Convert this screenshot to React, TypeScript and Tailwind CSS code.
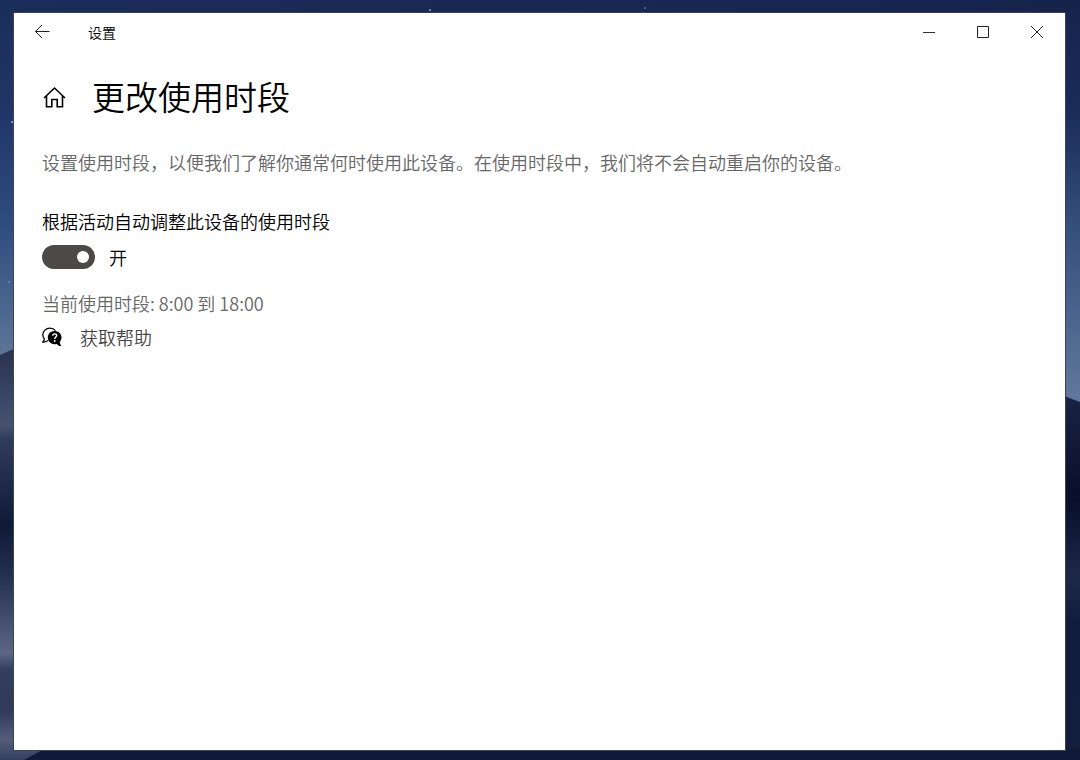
import { useState } from "react"

function Wallpaper() {
    return (
        <svg className="absolute inset-0 w-full h-full" viewBox="0 0 1080 760" preserveAspectRatio="none" aria-hidden="true">
            <defs>
                <linearGradient id="skyLeft" x1="0" y1="0" x2="0" y2="1">
                    <stop offset="0" stopColor="#1b2d5a" />
                    <stop offset="0.15" stopColor="#213668" />
                    <stop offset="0.3" stopColor="#304d80" />
                    <stop offset="0.46" stopColor="#5a7396" />
                </linearGradient>
                <linearGradient id="skyRight" x1="0" y1="0" x2="0" y2="1">
                    <stop offset="0" stopColor="#16244c" />
                    <stop offset="0.15" stopColor="#1b2c59" />
                    <stop offset="0.3" stopColor="#36507d" />
                    <stop offset="0.52" stopColor="#60769a" />
                </linearGradient>
                <linearGradient id="skyTop" x1="0" y1="0" x2="1" y2="0">
                    <stop offset="0" stopColor="#1b2d5a" />
                    <stop offset="1" stopColor="#16244c" />
                </linearGradient>
                <linearGradient id="duneLeft" gradientUnits="userSpaceOnUse" x1="0" y1="348" x2="0" y2="760">
                    <stop offset="0" stopColor="#29324c" />
                    <stop offset="0.12" stopColor="#3a4666" />
                    <stop offset="0.19" stopColor="#47526f" />
                    <stop offset="0.22" stopColor="#303c5b" />
                    <stop offset="0.43" stopColor="#0e1a36" />
                    <stop offset="0.55" stopColor="#232f4f" />
                    <stop offset="0.74" stopColor="#5c6584" />
                    <stop offset="0.78" stopColor="#343f5e" />
                    <stop offset="0.88" stopColor="#303a58" />
                    <stop offset="0.95" stopColor="#535d7b" />
                    <stop offset="1" stopColor="#343e5e" />
                </linearGradient>
                <linearGradient id="duneRight" gradientUnits="userSpaceOnUse" x1="0" y1="396" x2="0" y2="760">
                    <stop offset="0" stopColor="#1a2342" />
                    <stop offset="0.28" stopColor="#070f2a" />
                    <stop offset="0.5" stopColor="#1e2848" />
                    <stop offset="0.62" stopColor="#121c3e" />
                    <stop offset="1" stopColor="#131d3e" />
                </linearGradient>
            </defs>
            <rect width="540" height="760" fill="url(#skyLeft)" />
            <rect x="540" width="540" height="760" fill="url(#skyRight)" />
            <rect width="1080" height="14" fill="url(#skyTop)" />
            <path d="M0 355L16 348L540 600V760H0Z" fill="url(#duneLeft)" />
            <path d="M540 500L1064 396L1080 402V760H540Z" fill="url(#duneRight)" />
            <path d="M24 760L46 748H1080V760Z" fill="#101a38" />
            <circle cx="12" cy="122" r="1" fill="#a9bad6" />
            <circle cx="430" cy="10" r="1" fill="#8fa0c4" />
            <circle cx="645" cy="8" r="1" fill="#5d6e98" />
            <circle cx="9" cy="282" r="1" fill="#6d87b0" />
        </svg>
    )
}

function HelpIcon() {
    return (
        <svg className="w-5 h-5" viewBox="0 0 20 20" fill="none" aria-hidden="true">
            <path d="M6.2 13.4C5 14.6 3 15.2 0.8 15C1.9 14 2.4 13 2.3 11.8C1.2 10.6 0.8 9.2 0.8 7.8C0.8 4.2 4 1.2 7.8 1.2C10.2 1.2 12.2 2.1 13.5 3.6" stroke="#000" strokeWidth="1.3" />
            <path d="M12.6 4C16.5 4 19.5 6.8 19.5 10.5C19.5 12.2 18.8 13.7 17.8 14.8C17.8 16.4 18.4 17.8 19.4 19C17.6 19.2 16 18.4 14.9 16.9C14.2 17.1 13.4 17.2 12.6 17.2C8.8 17.2 5.8 14.3 5.8 10.5C5.8 6.8 8.8 4 12.6 4Z" fill="#000" />
            <path d="M10.7 8.8C10.7 7.6 11.5 6.9 12.7 6.9C13.9 6.9 14.7 7.6 14.7 8.6C14.7 10 12.7 10 12.7 11.9" stroke="#fff" strokeWidth="1.4" />
            <circle cx="12.7" cy="14" r="0.9" fill="#fff" />
        </svg>
    )
}

export default function App() {
    const [auto, setAuto] = useState(true)

    return (
        <div className="relative flex min-h-screen pt-3 pr-[14px] pb-[9px] pl-[13px] bg-[#16244c] font-['Noto_Sans_CJK_SC',sans-serif] text-black">
            <Wallpaper />
            <div className="relative flex flex-1 flex-col border border-[#3a4254] bg-white">
                <header className="flex h-[38px] items-center pr-px">
                    <button type="button" aria-label="返回" className="flex h-9 w-14 items-center justify-center">
                        <svg width="16" height="16" viewBox="0 0 16 16" fill="none" stroke="#222" aria-hidden="true">
                            <path d="M15.5 7.5H1.5M8 1L1.5 7.5L8 14" />
                        </svg>
                    </button>
                    <span className="ml-[18px] flex-1 text-sm font-[350]">设置</span>
                    <button type="button" aria-label="最小化" className="flex h-9 w-[54px] items-center justify-center">
                        <svg width="12" height="12" viewBox="0 0 12 12" stroke="#333" aria-hidden="true">
                            <path d="M0 6.5H12" />
                        </svg>
                    </button>
                    <button type="button" aria-label="最大化" className="flex h-9 w-[54px] items-center justify-center">
                        <svg width="12" height="12" viewBox="0 0 12 12" fill="none" stroke="#222" aria-hidden="true">
                            <path d="M0.5 0.5H11.5V11.5H0.5Z" />
                        </svg>
                    </button>
                    <button type="button" aria-label="关闭" className="flex h-9 w-[54px] items-center justify-center">
                        <svg width="12" height="12" viewBox="0 0 12 12" stroke="#222" aria-hidden="true">
                            <path d="M0 0L12 12M12 0L0 12" />
                        </svg>
                    </button>
                </header>

                <main className="flex flex-col px-7 pt-[21px]">
                    <div className="flex items-center gap-[26px]">
                        <button type="button" aria-label="主页" className="flex h-6 w-6 items-center justify-center">
                            <svg width="24" height="24" viewBox="0 0 24 24" fill="none" stroke="#000" strokeWidth="1.6" aria-hidden="true">
                                <path d="M2 14L12.5 4L23 14M4.5 12V22.7H9.8V15.5H15.2V22.7H20.5V12" />
                            </svg>
                        </button>
                        <h1 className="text-[33px] leading-[48px] font-[350]">更改使用时段</h1>
                    </div>

                    <p className="mt-7 text-lg leading-7 font-[350] text-[#666]">
                        设置使用时段，以便我们了解你通常何时使用此设备。在使用时段中，我们将不会自动重启你的设备。
                    </p>

                    <label htmlFor="auto" className="mt-[31px] text-lg leading-7 font-[350]">根据活动自动调整此设备的使用时段</label>
                    <div className="mt-[10px] flex items-center gap-[14px]">
                        <input
                            id="auto"
                            type="checkbox"
                            role="switch"
                            checked={auto}
                            onChange={(e) => setAuto(e.target.checked)}
                            className="h-6 w-[53px] appearance-none rounded-full bg-[#4c4a48] before:mt-[6px] before:ml-[6px] before:block before:h-3 before:w-3 before:rounded-full before:bg-white checked:before:ml-[35px]"
                        />
                        <span className="text-lg leading-6 font-[350]">{auto ? "开" : "关"}</span>
                    </div>

                    <p className="mt-5 text-lg leading-7 font-[350] text-[#666]">当前使用时段: 8:00 到 18:00</p>
                    <a href="#" className="mt-[6px] flex items-center gap-[18px] text-lg leading-7 font-[350] text-[#444]">
                        <HelpIcon />
                        获取帮助
                    </a>
                </main>
            </div>
        </div>
    )
}
